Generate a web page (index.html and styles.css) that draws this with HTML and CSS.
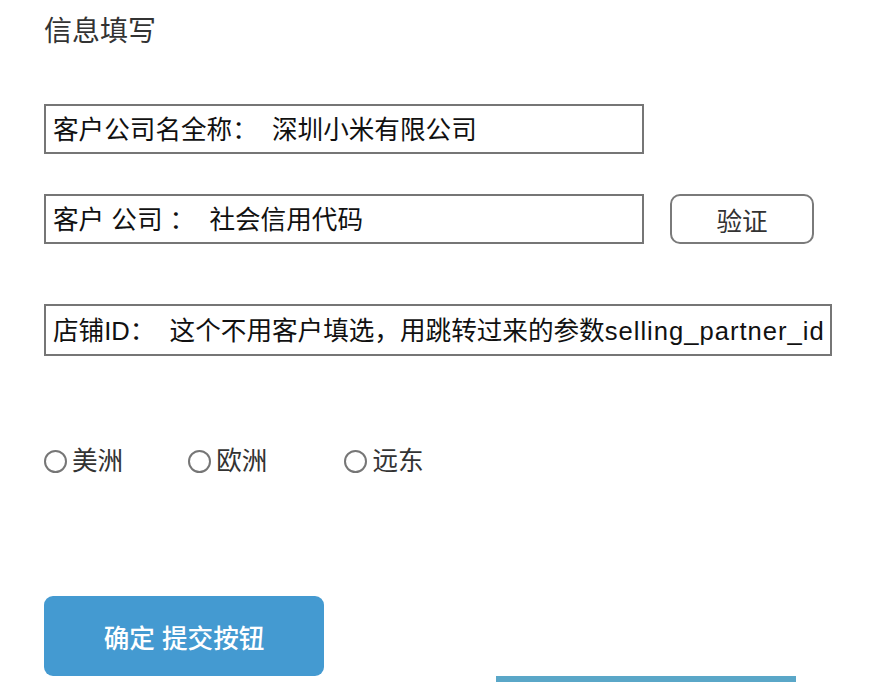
FILE: index.html
```html
<!DOCTYPE html>
<html lang="zh">
<head>
<meta charset="utf-8">
<title>信息填写</title>
<link rel="stylesheet" href="styles.css">
</head>
<body>
<div class="page">
  <h1 class="title">信息填写</h1>
  <div class="field w600 r1">客户公司名全称：  深圳小米有限公司</div>
  <div class="row r2">
    <div class="field w600">客户 公司 ：  社会信用代码</div>
    <button class="verify">验证</button>
  </div>
  <div class="field w788 r3">店铺ID：  这个不用客户填选，用跳转过来的参数<span class="latin">selling_partner_id</span></div>
  <div class="radios">
    <label class="radio r-a"><span class="circle"></span>美洲</label>
    <label class="radio r-b"><span class="circle"></span>欧洲</label>
    <label class="radio"><span class="circle"></span>远东</label>
  </div>
  <button class="submit">确定 提交按钮</button>
  <div class="bar"></div>
</div>
</body>
</html>
```
FILE: styles.css
```css
html, body {
  margin: 0;
  padding: 0;
  background: #fff;
}
body {
  font-family: "Liberation Sans", "Noto Sans CJK SC", sans-serif;
  color: #000;
  width: 888px;
  height: 682px;
  overflow: hidden;
}
.page {
  padding-left: 44px;
  display: flex;
  flex-direction: column;
  align-items: flex-start;
}
.title {
  margin: 14px 0 0 0;
  font-size: 28px;
  line-height: 36px;
  font-weight: 400;
  color: #333;
}
.field {
  box-sizing: border-box;
  height: 50px;
  border: 2px solid #767676;
  padding: 2px 7px 0 7px;
  font-size: 25.6px;
  line-height: 44px;
  white-space: pre;
  overflow: hidden;
  color: #111;
}
.w600 { width: 600px; }
.w788 { width: 788px; height: 52px; line-height: 46px; }
.latin { letter-spacing: 1px; }
.r1 { margin-top: 54px; }
.row {
  display: flex;
  align-items: center;
  gap: 26px;
}
.r2 { margin-top: 40px; }
.r3 { margin-top: 60px; }
.verify {
  box-sizing: border-box;
  width: 144px;
  height: 50px;
  border: 2px solid #7a7a7a;
  border-radius: 10px;
  background: #fff;
  font-family: inherit;
  font-size: 25.6px;
  color: #333;
  padding: 0;
}
.radios {
  margin-top: 88px;
  display: flex;
  align-items: center;
  font-size: 25.6px;
  color: #333;
  line-height: 34px;
}
.radio {
  display: flex;
  align-items: center;
  gap: 5px;
}
.r-a { margin-right: 65px; }
.r-b { margin-right: 77px; }
.circle {
  box-sizing: border-box;
  width: 23px;
  height: 23px;
  border: 2px solid #767676;
  border-radius: 50%;
  background: #fff;
}
.submit {
  margin-top: 118px;
  box-sizing: border-box;
  width: 280px;
  height: 80px;
  border: none;
  border-radius: 9px;
  background: #449ad1;
  color: #fff;
  font-family: inherit;
  font-size: 25.6px;
  font-weight: 500;
  padding: 0;
}
.bar {
  margin-left: 452px;
  width: 300px;
  height: 10px;
  background: #5aa7c8;
}
```
